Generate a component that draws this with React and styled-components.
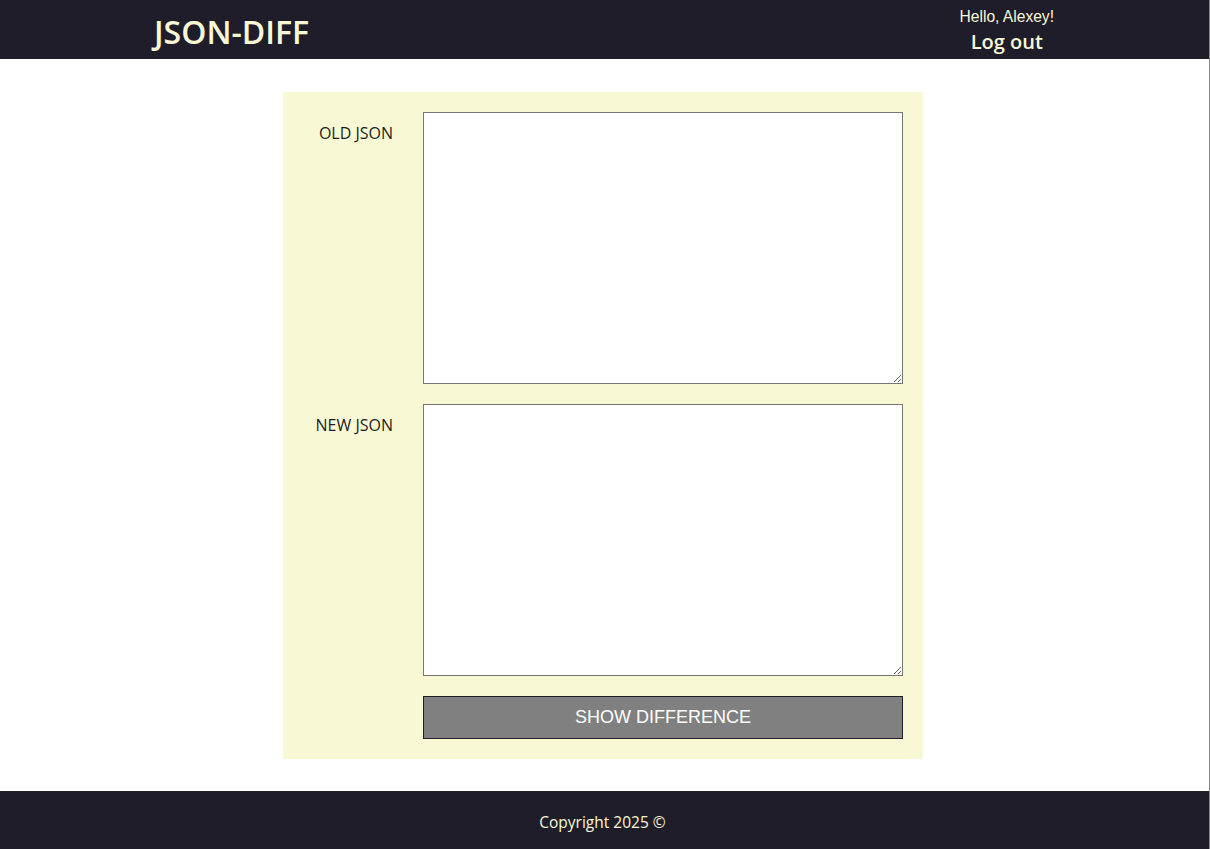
import React, { useState } from 'react';
import styled, { createGlobalStyle } from 'styled-components';

const GlobalStyle = createGlobalStyle`
  body {
    margin: 0;
    background: #ffffff;
    font-family: "Open Sans", "Noto Sans", sans-serif;
  }
`;

const Page = styled.div`
  min-height: 849px;
  display: flex;
  flex-direction: column;
  border-right: 1px solid #8a8a8a;
  box-sizing: border-box;
`;

const Header = styled.header`
  height: 59px;
  background: #201d2b;
  display: flex;
  align-items: center;
  justify-content: space-between;
  padding: 0 155px 0 154px;
  box-sizing: border-box;
`;

const Logo = styled.div`
  color: #f8f8d6;
  font-size: 32px;
  font-weight: 600;
  padding-top: 4px;
`;

const User = styled.div`
  display: flex;
  flex-direction: column;
  align-items: center;
  color: #f8f8d6;
  padding-top: 2px;
`;

const Hello = styled.span`
  font-family: "Liberation Sans", Arial, sans-serif;
  font-size: 15.6px;
  line-height: 22px;
`;

const LogOut = styled.button`
  background: none;
  border: 0;
  padding: 0;
  color: #f8f8d6;
  font-family: "Open Sans", "Noto Sans", sans-serif;
  font-size: 20px;
  font-weight: 600;
  line-height: 28px;
  cursor: pointer;
`;

const Main = styled.main`
  flex: 1;
  display: flex;
  justify-content: center;
  padding: 33px 3px 32px 0;
`;

const Panel = styled.form`
  width: 640px;
  background: #f8f8d4;
  padding: 20px;
  box-sizing: border-box;
  display: grid;
  grid-template-columns: 90px 480px;
  column-gap: 30px;
  row-gap: 20px;
`;

const Label = styled.label`
  text-align: right;
  font-size: 16px;
  color: #1d1d1d;
  padding-top: 10px;
  white-space: nowrap;
`;

const Area = styled.textarea`
  width: 480px;
  height: 272px;
  box-sizing: border-box;
  border: 1px solid #767676;
  margin: 0;
  display: block;
  background: #fff;
`;

const Submit = styled.button`
  grid-column: 2;
  height: 43px;
  background: #808080;
  border: 1px solid #201d2b;
  color: #ffffff;
  font-family: "Liberation Sans", Arial, sans-serif;
  font-size: 18px;
  cursor: pointer;
`;

const Footer = styled.footer`
  height: 58px;
  background: #201d2b;
  color: #f8f8d6;
  display: flex;
  align-items: center;
  justify-content: center;
  font-size: 15.5px;
  padding: 4px 4px 0 0;
  box-sizing: border-box;
`;

export default function App() {
  const [oldJson, setOldJson] = useState('');
  const [newJson, setNewJson] = useState('');

  const handleSubmit = (e) => {
    e.preventDefault();
  };

  return (
    <>
      <GlobalStyle />
      <Page>
        <Header>
          <Logo>JSON-DIFF</Logo>
          <User>
            <Hello>Hello, Alexey!</Hello>
            <LogOut type="button">Log out</LogOut>
          </User>
        </Header>
        <Main>
          <Panel onSubmit={handleSubmit}>
            <Label htmlFor="old">OLD JSON</Label>
            <Area id="old" value={oldJson} onChange={(e) => setOldJson(e.target.value)} />
            <Label htmlFor="new">NEW JSON</Label>
            <Area id="new" value={newJson} onChange={(e) => setNewJson(e.target.value)} />
            <Submit type="submit">SHOW DIFFERENCE</Submit>
          </Panel>
        </Main>
        <Footer>Copyright 2025 ©</Footer>
      </Page>
    </>
  );
}
